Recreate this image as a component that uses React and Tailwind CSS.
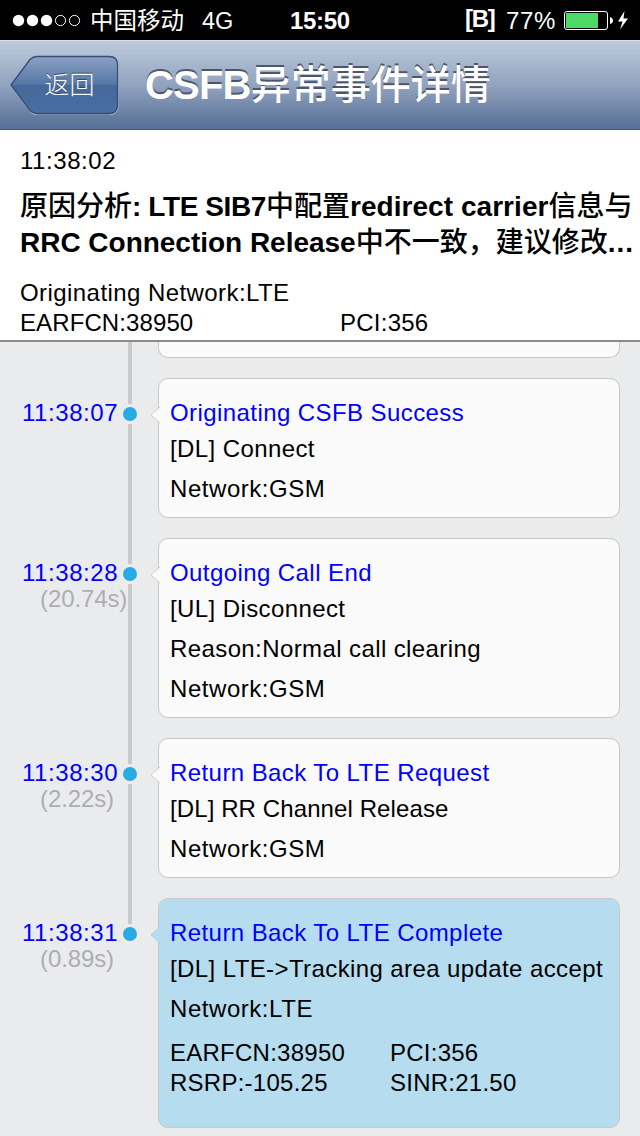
import React from "react";
import clsx from "clsx";

const events = [
  {
    time: "11:38:07",
    title: "Originating CSFB Success",
    lines: ["[DL] Connect"],
    network: "GSM",
  },
  {
    time: "11:38:28",
    duration: "(20.74s)",
    title: "Outgoing Call End",
    lines: ["[UL] Disconnect", "Reason:Normal call clearing"],
    network: "GSM",
  },
  {
    time: "11:38:30",
    duration: "(2.22s)",
    title: "Return Back To LTE Request",
    lines: ["[DL] RR Channel Release"],
    network: "GSM",
    tight: true,
  },
  {
    time: "11:38:31",
    duration: "(0.89s)",
    title: "Return Back To LTE Complete",
    lines: ["[DL] LTE->Tracking area update accept"],
    network: "LTE",
    stats: ["EARFCN:38950", "PCI:356", "RSRP:-105.25", "SINR:21.50"],
    active: true,
  },
];

function StatusBar() {
  return (
    <div className="flex h-10 items-center bg-black text-2xl leading-10 text-white">
      <svg className="ml-3 h-[14px] w-[70px] shrink-0" viewBox="0 0 70 14">
        <circle cx="6.5" cy="7.5" r="5.7" fill="#fff" />
        <circle cx="20.5" cy="7.5" r="5.7" fill="#fff" />
        <circle cx="34.5" cy="7.5" r="5.7" fill="#fff" />
        <circle cx="48.5" cy="7.5" r="5.1" fill="none" stroke="#fff" />
        <circle cx="62.5" cy="7.5" r="5.1" fill="none" stroke="#fff" />
      </svg>
      <span className="ml-[8px] w-[112px] whitespace-nowrap pt-px text-[23.5px]">中国移动</span>
      <span className="w-[88px] pt-px text-[23.5px]">4G</span>
      <span className="w-[175px] pt-px font-bold tracking-[-0.3px]">15:50</span>
      <span className="w-[41px] pb-[3px] font-bold tracking-[-1.3px]">[B]</span>
      <span className="w-[57px] whitespace-nowrap pt-px tracking-[0.6px]">77%</span>
      <svg className="h-10 w-[70px] shrink-0" viewBox="0 0 70 40">
        <rect x="1.5" y="11.5" width="43" height="18" rx="2.5" fill="none" stroke="#fff" />
        <rect x="3" y="13" width="32" height="15" fill="#4cd964" />
        <path d="M47 17q3 1 3 3.500t-3 3.500z" fill="#fff" />
        <path d="M61.500 11L55 21.500h4.500L57 29.500l8-11h-4.500z" fill="#fff" />
      </svg>
    </div>
  );
}

function NavBar() {
  return (
    <div className="flex h-[90px] items-center border-t border-b border-t-[#d5dfe9] border-b-[#3e5a86] bg-linear-to-b from-[#bdcbdc] via-[#92a3bf] to-[#566f97]">
      <button className="relative ml-[10px] h-[60px] w-[109px] shrink-0 text-white">
        <svg className="absolute inset-0" width="109" height="60" viewBox="0 0 109 60">
          <defs>
            <linearGradient id="back" x1="0" y1="0" x2="0" y2="1">
              <stop offset="0" stopColor="#8ba1c1" />
              <stop offset="0.5" stopColor="#5476a6" />
              <stop offset="0.5" stopColor="#466899" />
              <stop offset="1" stopColor="#4a6ea4" />
            </linearGradient>
          </defs>
          <path
            d="M1 31L20 5.500Q23 2 27 2H99Q108 2 108 11V51Q108 60 99 60H27Q23 60 20 56.500Z"
            fill="none"
            stroke="#a9b9cf"
          />
          <path
            d="M1 30L20 4.500Q23 1.500 27 1.500H99Q107.500 1.500 107.500 10V50Q107.500 58.500 99 58.500H27Q23 58.500 20 55.500Z"
            fill="url(#back)"
            stroke="#364e73"
            strokeWidth="1.300"
          />
        </svg>
        <span className="relative pl-[10px] text-[25px] font-light [text-shadow:0_-1px_0_#34496b]">返回</span>
      </button>
      <h1 className="ml-[26px] whitespace-nowrap text-[40px] leading-[50px] font-bold text-white [text-shadow:0_-2px_0_#4b5769]">
        <span className="tracking-[-0.8px]">CSFB</span>
        <span className="font-medium">异常事件详情</span>
      </h1>
    </div>
  );
}

function Summary() {
  return (
    <div className="h-[212px] border-b-2 border-[#8b8b8b] bg-white pl-5 pt-4">
      <p className="tracking-[0.55px]">11:38:02</p>
      <div className="mt-[13px] whitespace-nowrap text-[28px] leading-9 font-bold">
        <p>
          <span className="font-medium">原因分析</span>
          <span className="tracking-[-0.4px]">: LTE SIB7</span>
          <span className="font-medium">中配置</span>
          <span className="tracking-[0.05px]">redirect carrier</span>
          <span className="font-medium">信息与</span>
        </p>
        <p>
          <span className="tracking-[-0.02px]">RRC Connection Release</span>
          <span className="font-medium">中不一致，建议修改</span>
          <span className="tracking-[1px]">...</span>
        </p>
      </div>
      <p className="mt-[17px] tracking-[0.43px]">Originating Network:LTE</p>
      <div className="grid grid-cols-2">
        <p className="tracking-[0.1px]">EARFCN:38950</p>
        <p className="pl-[10px] tracking-[0.25px]">PCI:356</p>
      </div>
    </div>
  );
}

function EventRow({ event, last }) {
  const { time, duration, title, lines, network, stats, active, tight } = event;
  return (
    <div className="flex">
      {/* time and duration */}
      <div className="w-[120px] shrink-0 whitespace-nowrap pt-5 pl-[22px]">
        <p className="tracking-[0.55px] text-[#0000ff]">{time}</p>
        <p className="-mt-1 pl-[18px] tracking-[-0.1px] text-[#adadb3]">{duration}</p>
      </div>

      {/* rail */}
      <div className="flex w-5 shrink-0 flex-col items-center">
        <div className="h-[26px] w-1 bg-[#cacaca]" />
        <div className="my-[3px] size-[14px] rounded-full bg-[#29abe2]" />
        {!last && <div className="w-1 flex-1 bg-[#cacaca]" />}
      </div>

      {/* bubble */}
      <div className="ml-[18px] w-[462px] pb-5">
        <div
          className={clsx(
            "relative rounded-[10px] border border-[#c8c8c8] px-[11px] pt-[19px]",
            active ? "bg-[#b5ddef] pb-[29px]" : "bg-[#fafafa] pb-[13px]"
          )}
        >
          <svg className="absolute -left-[9px] top-[27px]" width="10" height="18" viewBox="0 0 10 18">
            <path
              d="M10 1L1 9L10 17"
              fill={active ? "#b5ddef" : "#fafafa"}
              stroke={active ? "#b5cdd8" : "#cfcfcf"}
            />
          </svg>
          <p className="tracking-[0.42px] text-[#0000ff]">{title}</p>
          <div className="mt-[6px] space-y-[10px] whitespace-nowrap">
            {lines.map((line) => (
              <p key={line} className={tight ? "tracking-[0.1px]" : "tracking-[0.4px]"}>
                {line}
              </p>
            ))}
            <p className="tracking-[0.55px]">Network:{network}</p>
          </div>
          {stats && (
            <div className="mt-[14px] grid grid-cols-[220px_1fr] tracking-[0.25px]">
              {stats.map((stat) => (
                <p key={stat}>{stat}</p>
              ))}
            </div>
          )}
        </div>
      </div>
    </div>
  );
}

export default function App() {
  return (
    <div className="h-[1136px] w-[640px] overflow-hidden bg-[#eaebed] font-['Liberation_Sans','Noto_Sans_CJK_SC',sans-serif] text-2xl leading-[30px] text-black">
      <StatusBar />
      <NavBar />
      <Summary />

      {/* end of the previous event, scrolled under the summary */}
      <div className="flex h-9">
        <div className="ml-[128px] w-1 bg-[#cacaca]" />
        <div className="ml-[26px] h-4 w-[462px] rounded-b-[10px] border border-t-0 border-[#c8c8c8] bg-[#fafafa]" />
      </div>

      {events.map((event, i) => (
        <EventRow key={event.time} event={event} last={i === events.length - 1} />
      ))}
    </div>
  );
}
